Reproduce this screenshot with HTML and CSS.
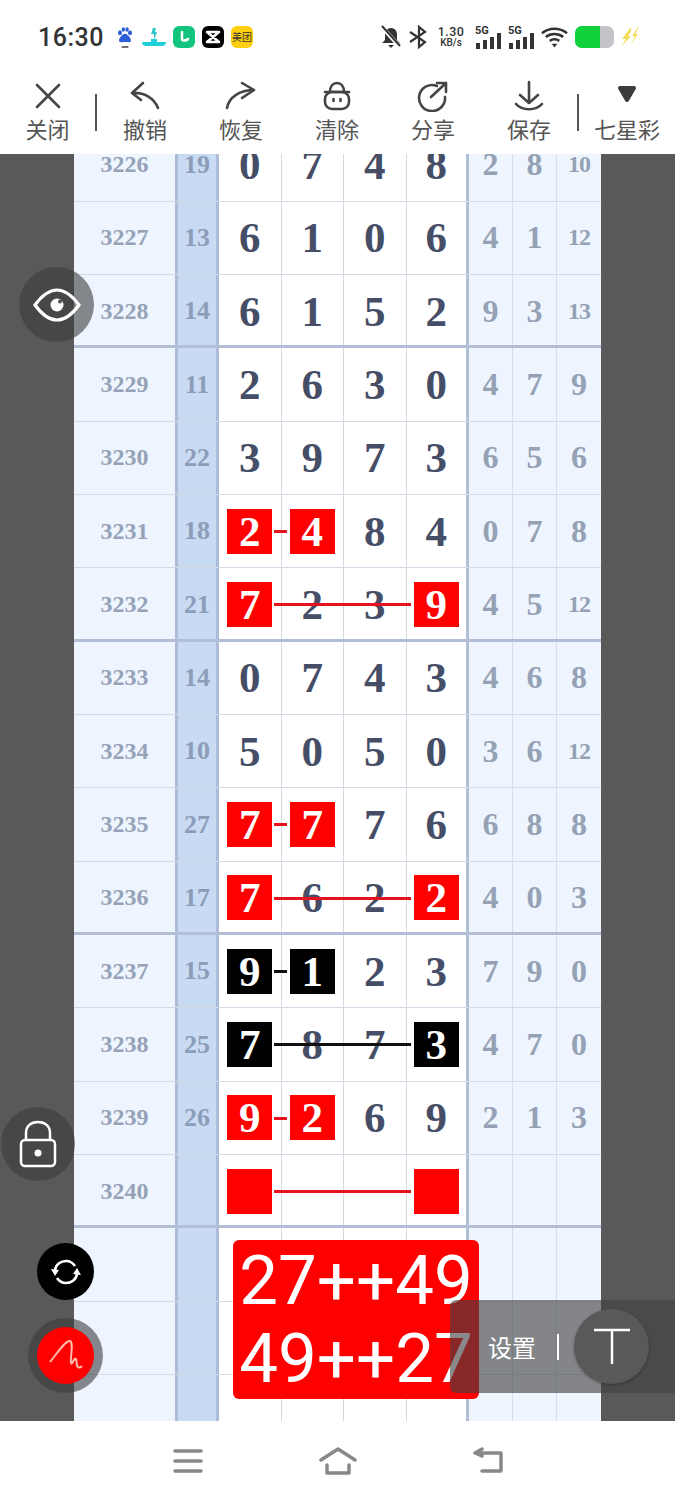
FILE: index.html
```html
<!DOCTYPE html>
<html lang="zh-CN">
<head>
  <meta charset="UTF-8" />
  <meta name="viewport" content="width=device-width, initial-scale=1.0" />
  <title>七星彩</title>
  <link rel="stylesheet" href="styles.css">
</head>
<body>
  <div class="statusbar">
    <div class="time">16:30</div>
    <div class="apps">
      <svg width="20" height="24" viewBox="0 0 24 28"><g fill="#2f5fd8"><ellipse cx="6" cy="9" rx="2.4" ry="3"/><ellipse cx="18" cy="9" rx="2.4" ry="3"/><ellipse cx="10" cy="5" rx="2" ry="2.8"/><ellipse cx="14.5" cy="5" rx="2" ry="2.8"/><path d="M12 10c3 0 8 6 7 9-1 2-4 1-7 1s-6 1-7-1c-1-3 4-9 7-9z"/></g><rect x="8" y="25" width="8" height="2" fill="#555"/></svg>
      <svg width="24" height="24" viewBox="0 0 24 24"><path d="M11 3h3l-1 4h2l-3 8v-6H9z" fill="#2ec4c9"/><path d="M9 14h6v3H9zM0 17h24c0 3-2 4-5 4H5c-3 0-5-1-5-4z" fill="#1fd0d8"/></svg>
      <span class="app app-green"><svg width="22" height="22" viewBox="0 0 22 22"><path d="M9 6v7c0 2 4 2 6 0" fill="none" stroke="#fff" stroke-width="2.5" stroke-linecap="round"/></svg></span>
      <span class="app app-black"><svg width="22" height="22" viewBox="0 0 22 22"><path d="M5 6h12L5 16h12z" fill="none" stroke="#fff" stroke-width="2.6" stroke-linejoin="round"/></svg></span>
      <span class="app app-yellow">美团</span>
    </div>
    <div class="sys">
      <svg class="s-bell" width="20" height="24" viewBox="0 0 20 24"><path d="M10 3c4 0 6 3 6 7v5l3 3H1l3-3v-5c0-4 2-7 6-7z" fill="#333"/><path d="M7 20h6l-3 3z" fill="#333"/><path d="M1 2l18 20" stroke="#fff" stroke-width="4"/><path d="M1 1l18 20" stroke="#333" stroke-width="2"/></svg>
      <svg class="s-bt" width="18" height="24" viewBox="0 0 18 24"><path d="M1 7l15 10-6 5V2l6 5L1 17" fill="none" stroke="#333" stroke-width="2.2"/></svg>
      <div class="speed"><b>1.30</b><span>KB/s</span></div>
      <div class="net"><span>5G</span><svg width="27" height="16" viewBox="0 0 27 16"><path d="M1 10h4v6H1zM8 7h4v9H8zM15 4h4v12h-4zM22 0h4v16h-4z" fill="#333"/></svg></div>
      <div class="net"><span>5G</span><svg width="27" height="16" viewBox="0 0 27 16"><path d="M1 10h4v6H1zM8 7h4v9H8zM15 4h4v12h-4zM22 0h4v16h-4z" fill="#333"/></svg></div>
      <svg class="s-wifi" width="27" height="24" viewBox="0 0 28 24"><path d="M1 8c8-6 18-6 26 0M5 12c5-4 13-4 18 0M9 16c3-2 7-2 10 0" fill="none" stroke="#333" stroke-width="2.6"/><path d="M11 19h6l-3 4z" fill="#333"/></svg>
      <div class="battery"><span></span></div>
      <svg class="s-bolt" width="20" height="22" viewBox="0 0 20 22"><path d="M12 1L3 13h4L2 21l10-11H9l3-5zM19 1l-6 9h3l-4 8 7-10h-3l4-7z" fill="#f2de55"/></svg>
    </div>
  </div>

  <div class="toolbar">
    <div class="tool first">
      <svg width="32" height="32" viewBox="0 0 32 32"><path d="M5 5l22 22M27 5L5 27"/></svg>
      <span>关闭</span>
    </div>
    <div class="tool-sep"></div>
    <div class="tool">
      <svg width="32" height="32" viewBox="0 0 32 32"><path d="M14 3L3 13l9 7M3 13c12-1 22 5 26 15"/></svg>
      <span>撤销</span>
    </div>
    <div class="tool">
      <svg width="32" height="32" viewBox="0 0 32 32"><path d="M2 28c2-11 13-18 27-18M17 3l12 7-12 8"/></svg>
      <span>恢复</span>
    </div>
    <div class="tool">
      <svg width="32" height="32" viewBox="0 0 32 32"><rect x="4" y="12" width="24" height="17" rx="7"/><path d="M4 12h24M9 12c0-6 3-9 7-9s7 3 7 9M12.5 19v2M19.5 19v2"/></svg>
      <span>清除</span>
    </div>
    <div class="tool">
      <svg width="32" height="32" viewBox="0 0 32 32"><path d="M20 6a13 13 0 1 0 8 11M14 17L29 3M20 3h9v9"/></svg>
      <span>分享</span>
    </div>
    <div class="tool">
      <svg width="32" height="32" viewBox="0 0 32 32"><path d="M16 2v21M7 15l9 8 9-8M3 24c6 7 20 7 26 0"/></svg>
      <span>保存</span>
    </div>
    <div class="tool-sep"></div>
    <div class="tool">
      <svg width="32" height="32" viewBox="0 0 32 32"><path class="solid" d="M9 8h14l-7 12z"/></svg>
      <span>七星彩</span>
    </div>
  </div>

  <div class="main">
    <div class="sheet">
      <div class="row"><div class="no">3226</div><div class="sum">19</div><div class="d">0</div><div class="d">7</div><div class="d">4</div><div class="d">8</div><div class="r">2</div><div class="r">8</div><div class="r small">10</div></div>
      <div class="row"><div class="no">3227</div><div class="sum">13</div><div class="d">6</div><div class="d">1</div><div class="d">0</div><div class="d">6</div><div class="r">4</div><div class="r">1</div><div class="r small">12</div></div>
      <div class="row sep"><div class="no">3228</div><div class="sum">14</div><div class="d">6</div><div class="d">1</div><div class="d">5</div><div class="d">2</div><div class="r">9</div><div class="r">3</div><div class="r small">13</div></div>
      <div class="row"><div class="no">3229</div><div class="sum">11</div><div class="d">2</div><div class="d">6</div><div class="d">3</div><div class="d">0</div><div class="r">4</div><div class="r">7</div><div class="r">9</div></div>
      <div class="row"><div class="no">3230</div><div class="sum">22</div><div class="d">3</div><div class="d">9</div><div class="d">7</div><div class="d">3</div><div class="r">6</div><div class="r">5</div><div class="r">6</div></div>
      <div class="row"><div class="no">3231</div><div class="sum">18</div><div class="d"><span class="hit">2</span></div><div class="d"><span class="hit">4</span></div><div class="d">8</div><div class="d">4</div><div class="r">0</div><div class="r">7</div><div class="r">8</div><i class="link short"></i></div>
      <div class="row sep"><div class="no">3232</div><div class="sum">21</div><div class="d"><span class="hit">7</span></div><div class="d">2</div><div class="d">3</div><div class="d"><span class="hit">9</span></div><div class="r">4</div><div class="r">5</div><div class="r small">12</div><i class="link long"></i></div>
      <div class="row"><div class="no">3233</div><div class="sum">14</div><div class="d">0</div><div class="d">7</div><div class="d">4</div><div class="d">3</div><div class="r">4</div><div class="r">6</div><div class="r">8</div></div>
      <div class="row"><div class="no">3234</div><div class="sum">10</div><div class="d">5</div><div class="d">0</div><div class="d">5</div><div class="d">0</div><div class="r">3</div><div class="r">6</div><div class="r small">12</div></div>
      <div class="row"><div class="no">3235</div><div class="sum">27</div><div class="d"><span class="hit">7</span></div><div class="d"><span class="hit">7</span></div><div class="d">7</div><div class="d">6</div><div class="r">6</div><div class="r">8</div><div class="r">8</div><i class="link short"></i></div>
      <div class="row sep"><div class="no">3236</div><div class="sum">17</div><div class="d"><span class="hit">7</span></div><div class="d">6</div><div class="d">2</div><div class="d"><span class="hit">2</span></div><div class="r">4</div><div class="r">0</div><div class="r">3</div><i class="link long"></i></div>
      <div class="row"><div class="no">3237</div><div class="sum">15</div><div class="d"><span class="hit dark">9</span></div><div class="d"><span class="hit dark">1</span></div><div class="d">2</div><div class="d">3</div><div class="r">7</div><div class="r">9</div><div class="r">0</div><i class="link short dark"></i></div>
      <div class="row"><div class="no">3238</div><div class="sum">25</div><div class="d"><span class="hit dark">7</span></div><div class="d">8</div><div class="d">7</div><div class="d"><span class="hit dark">3</span></div><div class="r">4</div><div class="r">7</div><div class="r">0</div><i class="link long dark"></i></div>
      <div class="row"><div class="no">3239</div><div class="sum">26</div><div class="d"><span class="hit">9</span></div><div class="d"><span class="hit">2</span></div><div class="d">6</div><div class="d">9</div><div class="r">2</div><div class="r">1</div><div class="r">3</div><i class="link short"></i></div>
      <div class="row sep"><div class="no">3240</div><div class="sum"></div><div class="d"><span class="hit"></span></div><div class="d"></div><div class="d"></div><div class="d"><span class="hit"></span></div><div class="r"></div><div class="r"></div><div class="r"></div><i class="link long"></i></div>
      <div class="row"><div class="no"></div><div class="sum"></div><div class="d"></div><div class="d"></div><div class="d"></div><div class="d"></div><div class="r"></div><div class="r"></div><div class="r"></div></div>
      <div class="row"><div class="no"></div><div class="sum"></div><div class="d"></div><div class="d"></div><div class="d"></div><div class="d"></div><div class="r"></div><div class="r"></div><div class="r"></div></div>
      <div class="row"><div class="no"></div><div class="sum"></div><div class="d"></div><div class="d"></div><div class="d"></div><div class="d"></div><div class="r"></div><div class="r"></div><div class="r"></div></div>
    </div>
  </div>

  <div class="navbar">
    <svg width="30" height="26" viewBox="0 0 30 26"><path d="M2 3h26M2 13h26M2 23h26"/></svg>
    <svg width="38" height="30" viewBox="0 0 38 30"><path d="M2 14L19 3l17 11M8 19v8h22v-8"/></svg>
    <svg width="32" height="28" viewBox="0 0 32 28"><path d="M10 2L3 6l7 3M3 6h26v18H10"/></svg>
  </div>

  <div class="note">27++49<br>49++27</div>

  <div class="float eye">
    <svg width="48" height="34" viewBox="0 0 48 34"><path d="M2 17C10 6 17 2 24 2s14 4 22 15c-8 11-15 15-22 15S10 28 2 17z" fill="none" stroke="#fff" stroke-width="3.2"/><circle cx="24" cy="17" r="6.5" fill="#fff"/><circle cx="27" cy="13.5" r="2" fill="#555"/></svg>
  </div>
  <div class="float lock">
    <svg width="38" height="48" viewBox="0 0 38 48"><rect x="2" y="20" width="34" height="26" rx="4" fill="none" stroke="#fff" stroke-width="2.5"/><path d="M7 20v-7c0-7 5-11 12-11s12 4 12 11v7" fill="none" stroke="#fff" stroke-width="2.5"/><circle cx="19" cy="33" r="3.5" fill="#fff"/></svg>
  </div>
  <div class="float sync">
    <svg width="32" height="32" viewBox="0 0 32 32"><path d="M5 14C6 8 11 5 16 5c4 0 7 2 9 5M27 18c-1 6-6 9-11 9-4 0-7-2-9-5" fill="none" stroke="#fff" stroke-width="2.6"/><path d="M1 13l8 1-4 6zM31 19l-8-1 4-6z" fill="#fff"/></svg>
  </div>
  <div class="float pen">
    <span>
      <svg width="40" height="40" viewBox="0 0 40 40"><path d="M4 26C12 16 20 4 24 5c4 2 0 16 1 22 1 3 3-6 5-4 1 2 0 7 2 8 1 1 3 0 4-1" fill="none" stroke="#ffb9a8" stroke-width="2"/></svg>
    </span>
  </div>

  <div class="panel">
    <span class="panel-text">设置</span>
    <span class="panel-sep"></span>
    <div class="panel-btn"><svg width="38" height="38" viewBox="0 0 38 38"><path d="M1 2h36M19 2v34" stroke="#fff" stroke-width="2.5"/></svg></div>
  </div>
</body>
</html>
```

FILE: styles.css
```css
* {
  box-sizing: border-box;
}

body {
  margin: 0;
  width: 675px;
  height: 1500px;
  overflow: hidden;
  position: relative;
  background: #fff;
  font-family: "Noto Sans CJK SC", "Noto Sans", sans-serif;
}

/* status bar */
.statusbar {
  height: 72px;
  display: flex;
  align-items: center;
  padding: 2px 0 0 38px;
  color: #333;
}

.time {
  font-family: Roboto, sans-serif;
  font-size: 25px;
  font-weight: 500;
  letter-spacing: 0.5px;
  width: 77px;
}

.apps {
  display: flex;
  align-items: center;
  gap: 7px;
}

.app {
  width: 22px;
  height: 22px;
  border-radius: 6px;
  display: flex;
  align-items: center;
  justify-content: center;
}

.app-green {
  background: #12c47e;
}

.app-black {
  background: #000;
}

.app-yellow {
  background: #ffcf0d;
  color: #333;
  font-size: 10px;
  line-height: 1;
  white-space: nowrap;
}

.sys {
  margin-left: auto;
  width: 258px;
  margin-right: 36px;
  display: flex;
  align-items: center;
}

.s-bt {
  margin-left: 8px;
}

.speed {
  width: 28px;
  margin-left: 10px;
  display: flex;
  flex-direction: column;
  align-items: center;
  font-family: Roboto, sans-serif;
  line-height: 11px;
  font-size: 10px;
  font-weight: 500;
}

.speed b {
  font-size: 12.5px;
  font-weight: 500;
  letter-spacing: 0.4px;
}

.net {
  display: flex;
  flex-direction: column;
  width: 27px;
  margin-left: 10px;
  font-family: Roboto, sans-serif;
  font-size: 11px;
  font-weight: 700;
  line-height: 9px;
}

.net + .net {
  margin-left: 6px;
}

.net svg {
  margin-top: -2px;
}

.s-wifi {
  margin-left: 6px;
}

.battery {
  width: 39px;
  height: 22px;
  margin-left: 7px;
  border-radius: 7px;
  background: #c2c4c8;
  overflow: hidden;
}

.battery span {
  display: block;
  width: 25px;
  height: 100%;
  background: #10d23c;
}

.s-bolt {
  margin-left: 5px;
}

/* toolbar */
.toolbar {
  height: 82px;
  display: flex;
  align-items: flex-start;
}

.tool {
  width: 96px;
  display: flex;
  flex-direction: column;
  align-items: center;
  color: #555;
  font-size: 22px;
  line-height: 30px;
  padding-top: 8px;
}

.tool.first {
  width: 95px;
}

.tool span {
  white-space: nowrap;
  margin-top: 1px;
}

.tool svg path,
.tool svg rect {
  fill: none;
  stroke: #444;
  stroke-width: 2.6;
  stroke-linecap: round;
  stroke-linejoin: round;
}

.tool svg .solid {
  fill: #3c3c3c;
  stroke: #3c3c3c;
  stroke-width: 4;
}

.tool-sep {
  width: 2px;
  height: 37px;
  margin-top: 22px;
  background: #555;
}

/* sheet */
.main {
  height: 1267px;
  background: #595959;
  padding: 0 74px;
  overflow: hidden;
}

.sheet {
  margin-top: -25.5px;
}

.row {
  position: relative;
  height: 73.33px;
  display: grid;
  grid-template-columns: 101px 44px repeat(4, 62.5px) repeat(3, 44px);
  border-bottom: 1px solid #d3dae6;
  font-family: "Liberation Serif", serif;
  font-weight: bold;
}

.row.sep {
  border-bottom: 3px solid #b1bed6;
}

.row > div {
  display: flex;
  align-items: center;
  justify-content: center;
}

.row.sep > div {
  padding-top: 2px;
}

.no {
  background: #eef5fe;
  color: #95a2b8;
  font-size: 24px;
}

.sum {
  background: #c9daf3;
  color: #8c9dba;
  font-size: 26px;
  border-left: 3px solid #adbcd9;
  border-right: 3px solid #adbcd9;
}

.d {
  background: #fff;
  color: #454e66;
  font-size: 43px;
  border-right: 1px solid #d3d8e2;
}

.d:nth-child(6) {
  border-right: 3px solid #b1bed6;
}

.r {
  background: #eef5fe;
  color: #95a2b5;
  font-size: 32px;
  border-right: 1px solid #d5deea;
}

.r:nth-child(9) {
  border-right: 0;
}

.r.small {
  font-size: 24px;
  letter-spacing: -1px;
}

.hit {
  width: 45px;
  height: 45px;
  background: #fe0000;
  color: #fff;
  display: flex;
  align-items: center;
  justify-content: center;
}

.hit.dark {
  background: #000;
}

.link {
  position: absolute;
  left: 200px;
  top: 35px;
  height: 3px;
  background: #e5121f;
}

.link.short {
  width: 13px;
}

.link.long {
  width: 137px;
}

.link.dark {
  background: #111;
}

/* bottom nav */
.navbar {
  height: 79px;
  display: grid;
  grid-template-columns: repeat(3, 150px);
  justify-content: center;
  justify-items: center;
  align-items: center;
}

.navbar svg path {
  fill: none;
  stroke: #888;
  stroke-width: 3.5;
  stroke-linecap: round;
  stroke-linejoin: round;
}

/* things that float over the sheet */
.note {
  position: absolute;
  left: 233px;
  top: 1240px;
  width: 246px;
  height: 159px;
  padding-top: 2px;
  border-radius: 6px;
  background: #fe0000;
  color: #fff;
  font-family: Roboto, sans-serif;
  font-weight: 400;
  font-size: 69px;
  line-height: 78px;
  text-align: center;
  white-space: nowrap;
  overflow: hidden;
}

.float {
  position: absolute;
  border-radius: 50%;
  display: flex;
  align-items: center;
  justify-content: center;
}

.eye {
  left: 19px;
  top: 267px;
  width: 75px;
  height: 75px;
  background: rgba(60, 60, 60, 0.6);
}

.lock {
  left: 1px;
  top: 1107px;
  width: 74px;
  height: 74px;
  background: rgba(60, 60, 60, 0.6);
}

.sync {
  left: 37px;
  top: 1243px;
  width: 57px;
  height: 57px;
  background: #000;
}

.pen {
  left: 28px;
  top: 1318px;
  width: 75px;
  height: 75px;
  background: rgba(60, 60, 60, 0.6);
}

.pen span {
  width: 57px;
  height: 57px;
  border-radius: 50%;
  background: #fe0000;
  display: flex;
  align-items: center;
  justify-content: center;
}

.panel {
  position: absolute;
  left: 450px;
  top: 1300px;
  width: 225px;
  height: 93px;
  background: rgba(65, 65, 65, 0.62);
  border-radius: 6px 0 0 6px;
  display: flex;
  align-items: center;
  padding-left: 38px;
  color: #fff;
}

.panel-text {
  font-size: 24px;
  line-height: 1;
  width: 51px;
  white-space: nowrap;
}

.panel-sep {
  width: 2px;
  height: 26px;
  background: #fff;
  margin-left: 18px;
}

.panel-btn {
  width: 75px;
  height: 75px;
  border-radius: 50%;
  background: #595959;
  box-shadow: 0 1px 3px rgba(0, 0, 0, 0.3);
  margin-left: 15px;
  display: flex;
  align-items: center;
  justify-content: center;
}
```
